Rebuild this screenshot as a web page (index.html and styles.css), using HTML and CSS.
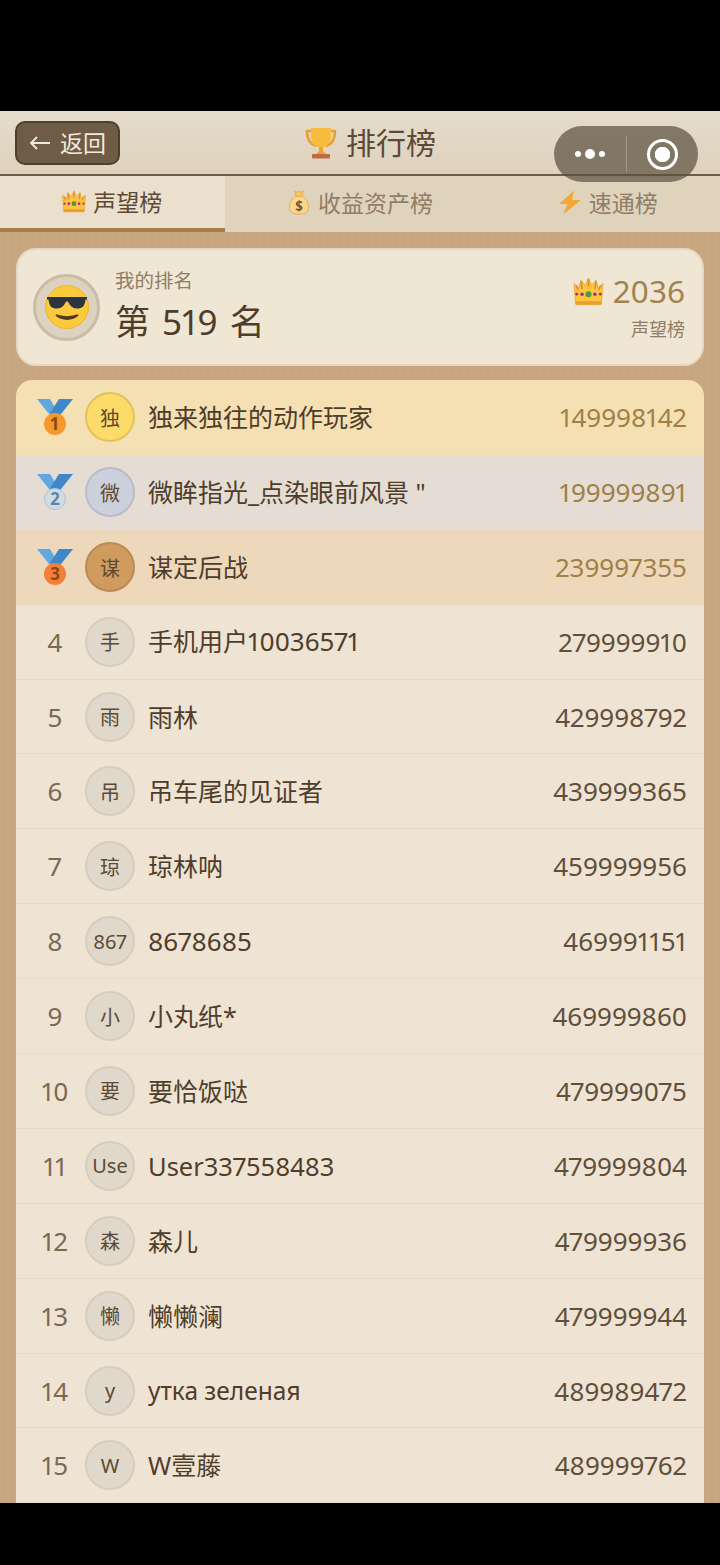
FILE: index.html
```html
<!DOCTYPE html>
<html lang="zh-CN">
<head>
<meta charset="UTF-8">
<meta name="viewport" content="width=device-width, initial-scale=1.0">
<title>排行榜</title>
<link rel="stylesheet" href="styles.css">
</head>
<body>

<svg class="defs" aria-hidden="true">
  <symbol id="crown" viewBox="2 1 28 27">
    <path d="M2.500 7L7 11l2-7 4 5 3-7 3 7 4-5 2 7 4.500-4L28 26H4z" fill="#fcc440" stroke="#e5a83c" stroke-width=".8"/>
    <path d="M9 5l1 7M16 3v7M23 5l-1 7M4.500 9l2 4M27.500 9l-2 4" stroke="#e08a2c" stroke-width="1.500" fill="none"/>
    <rect x="4" y="23.500" width="24" height="3.500" fill="#e9a02f"/>
    <circle cx="16" cy="17" r="2.800" fill="#4f9a35"/>
    <circle cx="10" cy="17" r="1.600" fill="#9b2bb0"/>
    <circle cx="22" cy="17" r="1.600" fill="#9b2bb0"/>
    <circle cx="5" cy="17" r="1.300" fill="#c62a3a"/>
    <circle cx="27" cy="17" r="1.300" fill="#c62a3a"/>
  </symbol>
  <symbol id="ribbon" viewBox="0 0 36 38">
    <path d="M0 1h13l9 15-6 5z" fill="#62a8e0"/>
    <path d="M36 1H22l-9 14 7 6z" fill="#3d88c8"/>
  </symbol>
</svg>

<div class="app">
  <header class="topbar">
    <button class="back-btn">
      <svg class="back-arrow" viewBox="0 0 22 14"><path d="M21 7H2M8 1L2 7l6 6" fill="none" stroke="#f3eadb" stroke-width="1.800"/></svg>
      返回
    </button>
    <h1 class="title">
      <svg class="trophy" viewBox="0 0 32 32">
        <path d="M7 4H2c0 8 2 13 9 15M25 4h5c0 8-2 13-9 15" fill="none" stroke="#e9a02f" stroke-width="2.600"/>
        <path d="M6 1h20v8c0 7-4 11-10 12C10 20 6 16 6 9z" fill="#f8bd3f"/>
        <path d="M14 20h4v4l3 3H11l3-3z" fill="#eea52f"/>
        <rect x="7" y="27" width="18" height="4.500" rx="1" fill="#bd6b45"/>
      </svg>
      排行榜
    </h1>
  </header>

  <nav class="tabs">
    <div class="tab tab-active"><svg class="tab-icon"><use href="#crown"/></svg>声望榜</div>
    <div class="tab">
      <svg class="tab-icon" viewBox="0 0 24 28">
        <path d="M8 7C2 11 1 17 1.500 21c.5 4 4 6 10.500 6s10-2 10.500-6C23 17 22 11 16 7z" fill="#fbd58a" stroke="#e0a84e"/>
        <path d="M7 1l3 1.500L12 1l2 1.500L17 1l-1.500 6h-7z" fill="#f3c468" stroke="#e0a84e" stroke-width=".8"/>
        <text x="12" y="23" class="bag-sign">$</text>
      </svg>
      收益资产榜
    </div>
    <div class="tab">
      <svg class="tab-icon" viewBox="0 0 24 24"><path d="M16 0L1 13.500h8.500L5 24l18-14.500h-9z" fill="#f5a733"/></svg>
      速通榜
    </div>
  </nav>

  <main class="content">
    <section class="my-card">
      <div class="my-avatar">
        <svg class="smiley" viewBox="0 0 46 46">
          <circle cx="23" cy="23" r="21.500" fill="#fbc93c" stroke="#eab52f"/>
          <path d="M3 13h40v2.500h-1.500c-1 7-3 9-8.500 9-5 0-7-3-9-7h-2c-2 4-4 7-9 7-5.500 0-7.500-2-8.500-9H3z" fill="#2b3440"/>
          <path d="M12 31c6 5.500 16 5.500 22 0-6 2.500-16 2.500-22 0z" fill="#54391f" stroke="#54391f" stroke-width="1.500"/>
        </svg>
      </div>
      <div class="my-info">
        <div class="my-label">我的排名</div>
        <div class="my-rank">第 519 名</div>
      </div>
      <div class="my-score">
        <div class="my-points"><svg class="crown-big"><use href="#crown"/></svg>2036</div>
        <div class="my-board">声望榜</div>
      </div>
    </section>

    <section class="list">
      <div class="row row-gold">
        <div class="rank">
          <svg class="medal" viewBox="0 0 36 38"><use href="#ribbon"/><circle cx="18" cy="26" r="11" fill="#f59a2a"/><text x="18" y="32" class="medal-num">1</text></svg>
        </div>
        <div class="avatar avatar-gold">独</div>
        <div class="name">独来独往的动作玩家</div>
        <div class="score score-top">149998142</div>
      </div>
      <div class="row row-silver">
        <div class="rank">
          <svg class="medal" viewBox="0 0 36 38"><use href="#ribbon"/><circle cx="18" cy="26" r="10.500" fill="#cfdce6" stroke="#b2c2d0"/><text x="18" y="32" class="medal-num num-blue">2</text></svg>
        </div>
        <div class="avatar avatar-silver">微</div>
        <div class="name">微眸指光_点染眼前风景 "</div>
        <div class="score score-top">199999891</div>
      </div>
      <div class="row row-bronze">
        <div class="rank">
          <svg class="medal" viewBox="0 0 36 38"><use href="#ribbon"/><circle cx="18" cy="26" r="11" fill="#f57f3a"/><text x="18" y="32" class="medal-num">3</text></svg>
        </div>
        <div class="avatar avatar-bronze">谋</div>
        <div class="name">谋定后战</div>
        <div class="score score-top">239997355</div>
      </div>
      <div class="row"><div class="rank">4</div><div class="avatar">手</div><div class="name">手机用户<span class="latin">10036571</span></div><div class="score">279999910</div></div>
      <div class="row"><div class="rank">5</div><div class="avatar">雨</div><div class="name">雨林</div><div class="score">429998792</div></div>
      <div class="row"><div class="rank">6</div><div class="avatar">吊</div><div class="name">吊车尾的见证者</div><div class="score">439999365</div></div>
      <div class="row"><div class="rank">7</div><div class="avatar">琼</div><div class="name">琼林呐</div><div class="score">459999956</div></div>
      <div class="row"><div class="rank">8</div><div class="avatar">867</div><div class="name name-digits">8678685</div><div class="score">469991151</div></div>
      <div class="row"><div class="rank">9</div><div class="avatar">小</div><div class="name">小丸纸*</div><div class="score">469999860</div></div>
      <div class="row"><div class="rank">10</div><div class="avatar">要</div><div class="name">要恰饭哒</div><div class="score">479999075</div></div>
      <div class="row"><div class="rank">11</div><div class="avatar">Use</div><div class="name name-user">User337558483</div><div class="score">479999804</div></div>
      <div class="row"><div class="rank">12</div><div class="avatar">森</div><div class="name">森儿</div><div class="score">479999936</div></div>
      <div class="row"><div class="rank">13</div><div class="avatar">懒</div><div class="name">懒懒澜</div><div class="score">479999944</div></div>
      <div class="row"><div class="rank">14</div><div class="avatar">у</div><div class="name name-cyr">утка зеленая</div><div class="score">489989472</div></div>
      <div class="row"><div class="rank">15</div><div class="avatar">W</div><div class="name">W壹藤</div><div class="score">489999762</div></div>
    </section>
  </main>

  <!-- 小程序胶囊 -->
  <div class="capsule">
    <div class="capsule-dots"><i></i><i class="dot-big"></i><i></i></div>
    <div class="capsule-line"></div>
    <div class="capsule-target"><b></b></div>
  </div>
</div>

</body>
</html>
```

FILE: styles.css
```css
* {
  box-sizing: border-box;
}
html, body {
  margin: 0;
  height: 100%;
  background-color: #000;
  overflow: hidden;
}
body {
  padding: 111px 0 62px;
  font-family: "Noto Sans", "Noto Sans CJK SC", sans-serif;
  font-variant-numeric: proportional-nums;
  color: #4f3d2b;
}
.defs {
  display: none;
}
.app {
  position: relative;
  height: 100%;
  overflow: hidden;
  display: flex;
  flex-direction: column;
  background-color: #c8a67e;
  background-image: repeating-linear-gradient(90deg, rgba(255,255,255,0.015) 0 3px, rgba(0,0,0,0.005) 3px 7px);
}

/* 顶部 */
.topbar {
  flex: none;
  height: 65px;
  padding: 10px 15px 0;
  display: flex;
  position: relative;
  background: linear-gradient(180deg, #e5dccc, #dfd2bc);
  border-bottom: 2px solid #6e5c47;
}
.back-btn {
  width: 105px;
  height: 44px;
  padding: 0;
  display: flex;
  align-items: center;
  justify-content: center;
  gap: 9px;
  font-family: inherit;
  font-size: 23px;
  line-height: 1;
  color: #f3eadb;
  background-color: #6e5c47;
  border: 2px solid #4f3f2d;
  border-radius: 10px;
}
.back-arrow {
  width: 22px;
  height: 14px;
}
.title {
  position: absolute;
  left: 305px;
  top: 11px;
  margin: 0;
  display: flex;
  align-items: center;
  gap: 9px;
  font-size: 30px;
  font-weight: 400;
  line-height: 42px;
  color: #5c4a36;
}
.trophy {
  width: 32px;
  height: 32px;
}

/* 标签 */
.tabs {
  flex: none;
  height: 56px;
  display: flex;
  background-color: #e0d3bc;
}
.tab {
  flex: 1 1 auto;
  display: flex;
  align-items: center;
  justify-content: center;
  gap: 7px;
  padding-bottom: 4px;
  font-size: 23px;
  color: #8f7d66;
}
.tab-active {
  padding-bottom: 2px;
  color: #5c4a36;
  background-color: #ebe0cd;
  border-bottom: 4px solid #a87c45;
}
.tab-icon {
  width: 24px;
  height: 25px;
}
.bag-sign {
  font-size: 15px;
  font-weight: 700;
  fill: #6b5a3a;
  text-anchor: middle;
}

/* 内容 */
.content {
  flex: 1;
  min-height: 0;
  padding: 16px 16px 0;
}
.my-card {
  height: 118px;
  padding: 0 17px 0 15px;
  display: flex;
  align-items: center;
  background-color: #f0e6d4;
  border: 2px solid #e4d8c3;
  border-radius: 20px;
}
.my-avatar {
  width: 67px;
  height: 67px;
  display: flex;
  align-items: center;
  justify-content: center;
  background-color: #ddd2bf;
  border: 3px solid #c9bda6;
  border-radius: 50%;
}
.smiley {
  width: 46px;
  height: 46px;
}
.my-info {
  flex: 1;
  margin-left: 15px;
  padding-bottom: 3px;
}
.my-label {
  font-size: 19.500px;
  line-height: 28px;
  color: #8f7d66;
}
.my-rank {
  margin-top: 4px;
  font-size: 35px;
  line-height: 46px;
  word-spacing: 3px;
  color: #4f3d2b;
}
.my-score {
  padding-bottom: 3px;
  text-align: right;
}
.my-points {
  display: flex;
  align-items: center;
  justify-content: flex-end;
  gap: 9px;
  font-size: 31.500px;
  line-height: 44px;
  color: #a08350;
}
.crown-big {
  width: 31px;
  height: 29px;
}
.my-board {
  margin-top: 3px;
  font-size: 18px;
  line-height: 26px;
  color: #8f7d66;
}

/* 列表 */
.list {
  margin-top: 14px;
  border-radius: 16px 16px 0 0;
  overflow: hidden;
}
.row {
  height: 74.900px;
  padding: 0 17px 0 21px;
  display: flex;
  align-items: center;
  background-color: #efe4d3;
  border-bottom: 1px solid #e6dac7;
}
.row-gold {
  background-color: #f4e0b2;
  border-bottom: none;
}
.row-silver {
  background-color: #e5ddd3;
  border-bottom: none;
}
.row-bronze {
  background-color: #eed8bb;
  border-bottom: none;
}
.rank {
  width: 36px;
  margin-right: 12px;
  text-align: center;
  font-size: 26px;
  color: #7a6a55;
}
.medal {
  display: block;
  width: 36px;
  height: 38px;
}
.medal-num {
  font-size: 17px;
  font-weight: 700;
  fill: #8a4a14;
  text-anchor: middle;
}
.num-blue {
  fill: #5f87a8;
}
.avatar {
  flex: none;
  width: 50px;
  height: 50px;
  display: flex;
  align-items: center;
  justify-content: center;
  font-size: 20px;
  color: #5c4a36;
  background-color: #e0d8ca;
  border: 2px solid #d6cdbc;
  border-radius: 50%;
}
.avatar-gold {
  background-color: #fcdc68;
  border-color: #e3c259;
}
.avatar-silver {
  background-color: #ccd0dc;
  border-color: #b8bcc8;
}
.avatar-bronze {
  background-color: #cf9b5f;
  border-color: #bb8a52;
}
.name {
  flex: 1;
  margin-left: 13px;
  padding-bottom: 2px;
  font-size: 25px;
  color: #4f3d2b;
}
.latin {
  font-size: 26px;
}
.name-digits {
  padding-bottom: 0;
  font-size: 26px;
}
.name-user {
  padding-bottom: 0;
  font-size: 25.500px;
}
.name-cyr {
  padding-bottom: 0;
  font-size: 24.500px;
}
.score {
  font-size: 26px;
  color: #5f4f3b;
}
.score-top {
  color: #9e8048;
}

/* 胶囊 */
.capsule {
  position: absolute;
  top: 15px;
  right: 22px;
  width: 144px;
  height: 56px;
  display: flex;
  align-items: center;
  background-color: rgba(90, 78, 62, 0.7);
  border-radius: 28px;
}
.capsule-dots {
  width: 72px;
  display: flex;
  align-items: center;
  justify-content: center;
  gap: 4px;
}
.capsule-dots i {
  width: 6px;
  height: 6px;
  background-color: #fff;
  border-radius: 50%;
}
.capsule-dots .dot-big {
  width: 10px;
  height: 10px;
}
.capsule-line {
  width: 1px;
  height: 36px;
  background-color: rgba(255, 255, 255, 0.25);
}
.capsule-target {
  flex: 1;
  display: flex;
  align-items: center;
  justify-content: center;
}
.capsule-target b {
  width: 31px;
  height: 31px;
  border: 3px solid #fff;
  border-radius: 50%;
  background: radial-gradient(circle, #fff 0 7.500px, transparent 8px);
}
```
